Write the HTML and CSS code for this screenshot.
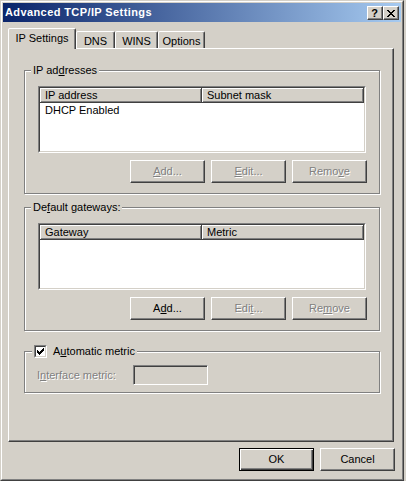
FILE: index.html
```html
<!DOCTYPE html>
<html>
<head>
<meta charset="utf-8">
<title>Advanced TCP/IP Settings</title>
<link rel="stylesheet" href="styles.css">
</head>
<body>
<div class="window">
  <div class="frame">
    <div class="titlebar">
      <span class="title">Advanced TCP/IP Settings</span>
      <div class="caption-btns">
        <span class="cbtn help">?</span>
        <span class="cbtn"><svg width="8" height="7" viewBox="0 0 8 7" shape-rendering="crispEdges"><path d="M0 0h2v1h-2zM6 0h2v1h-2zM1 1h2v1h-2zM5 1h2v1h-2zM2 2h4v1h-4zM3 3h2v1h-2zM2 4h4v1h-4zM1 5h2v1h-2zM5 5h2v1h-2zM0 6h2v1h-2zM6 6h2v1h-2z" fill="#000"/></svg></span>
      </div>
    </div>

    <div class="tabs">
      <div class="tab sel t-ip">IP Settings</div>
      <div class="tab t-dns">DNS</div>
      <div class="tab t-wins">WINS</div>
      <div class="tab t-opt">Options</div>
    </div>

    <div class="panel">
      <div class="group">
        <div class="gtitle">IP ad<u>d</u>resses</div>
        <div class="list">
          <div class="list-in">
            <div class="lhead"><div class="col">IP address</div><div class="col">Subnet mask</div></div>
            <div class="lrow">DHCP Enabled</div>
          </div>
        </div>
        <div class="btnrow">
          <div class="btn disabled"><span><u>A</u>dd...</span></div>
          <div class="btn disabled"><span><u>E</u>dit...</span></div>
          <div class="btn disabled"><span>Remo<u>v</u>e</span></div>
        </div>
      </div>

      <div class="group g2">
        <div class="gtitle">De<u>f</u>ault gateways:</div>
        <div class="list">
          <div class="list-in">
            <div class="lhead"><div class="col">Gateway</div><div class="col">Metric</div></div>
          </div>
        </div>
        <div class="btnrow">
          <div class="btn"><span>A<u>d</u>d...</span></div>
          <div class="btn disabled"><span>Edi<u>t</u>...</span></div>
          <div class="btn disabled"><span>Re<u>m</u>ove</span></div>
        </div>
      </div>

      <div class="group g3">
        <div class="gtitle gtitle-chk">
          <span class="chk"><span class="chk-in"><svg width="7" height="7" viewBox="0 0 7 7" shape-rendering="crispEdges"><path d="M6 0h1v3h-1v1h-1v1h-1v1h-1v1h-1v-1h-1v-1h-1v-3h1v1h1v1h1v-1h1v-1h1v-1h1v-1z" fill="#000"/></svg></span></span>
          <span>A<u>u</u>tomatic metric</span>
        </div>
        <div class="metric">
          <span class="mlabel disabled-text">I<u>n</u>terface metric:</span>
          <span class="mbox"></span>
        </div>
      </div>
    </div>

    <div class="footer">
      <div class="btn default"><span>OK</span></div>
      <div class="btn"><span>Cancel</span></div>
    </div>
  </div>
</div>
</body>
</html>
```

FILE: styles.css
```css
* {
  box-sizing: border-box;
}

body {
  margin: 0;
  background: #d4d0c8;
  font: 11px "Liberation Sans", Arial, sans-serif;
  color: #000;
}

u {
  text-decoration: underline;
  text-underline-offset: 1px;
}

.window {
  width: 404px;
  height: 481px;
  border: 1px solid;
  border-color: #d4d0c8 #404040 #404040 #d4d0c8;
  background: #d4d0c8;
}

.frame {
  height: 100%;
  border: 1px solid;
  border-color: #fff #808080 #808080 #fff;
  padding: 1px;
  display: flex;
  flex-direction: column;
}

/* title bar */
.titlebar {
  flex: none;
  height: 19px;
  display: flex;
  align-items: flex-start;
  padding-left: 2px;
  background: linear-gradient(to right, #0a246a, #a6caf0);
}

.title {
  margin-top: 3px;
  line-height: 13px;
  color: #fff;
  font-weight: bold;
  letter-spacing: 0.4px;
}

.caption-btns {
  display: flex;
  margin: 3px 2px 0 auto;
}

.cbtn {
  width: 16px;
  height: 14px;
  display: flex;
  align-items: center;
  justify-content: center;
  background: #d4d0c8;
  border: 1px solid;
  border-color: #fff #404040 #404040 #fff;
  box-shadow: inset -1px -1px 0 #808080;
}

.cbtn.help {
  font-weight: bold;
  font-size: 11px;
  line-height: 12px;
  padding-right: 1px;
}

/* tabs */
.tabs {
  flex: none;
  display: flex;
  align-items: flex-end;
  height: 20px;
  margin: 6px 0 0 5px;
  position: relative;
  z-index: 1;
}

.tab {
  height: 17px;
  padding-top: 3px;
  line-height: 12px;
  text-align: center;
  background: #d4d0c8;
  border: 1px solid;
  border-bottom: 0;
  border-color: #fff #404040 transparent #fff;
  border-radius: 2px 2px 0 0;
  box-shadow: inset -1px 0 0 #808080;
}

.tab.sel {
  height: 21px;
  margin-bottom: -1px;
  padding-top: 3px;
}

.t-ip { width: 68px; }
.t-dns { width: 39px; }
.t-wins { width: 43px; }
.t-opt { width: 47px; }

/* panel */
.panel {
  flex: 1;
  margin: 0 7px 0 5px;
  padding: 21px 0 0 15px;
  border: 1px solid;
  border-color: #fff #404040 #404040 #fff;
  box-shadow: inset -1px -1px 0 #808080;
}

.group {
  width: 356px;
  border: 1px solid #808080;
  box-shadow: 1px 1px 0 #fff, inset 1px 1px 0 #fff;
  padding-bottom: 10px;
}

.g2 {
  margin-top: 13px;
}

.g3 {
  margin-top: 20px;
  padding-bottom: 7px;
}

.gtitle {
  display: flex;
  align-items: center;
  width: fit-content;
  height: 13px;
  line-height: 13px;
  margin: -7px 0 0 6px;
  padding: 0 2px;
  background: #d4d0c8;
}

.gtitle-chk {
  margin-left: 7px;
}

/* list view */
.list {
  width: 328px;
  height: 67px;
  margin: 9px 0 0 13px;
  border: 1px solid;
  border-color: #808080 #fff #fff #808080;
}

.list-in {
  height: 100%;
  border: 1px solid;
  border-color: #404040 #d4d0c8 #d4d0c8 #404040;
  background: #fff;
}

.lhead {
  display: flex;
  height: 15px;
}

.col {
  flex: 1;
  height: 15px;
  padding: 1px 0 0 5px;
  line-height: 13px;
  background: #d4d0c8;
  border-right: 1px solid #404040;
  border-bottom: 1px solid #404040;
  box-shadow: inset 1px 1px 0 #fff, inset -1px -1px 0 #808080;
}

.lrow {
  padding-left: 5px;
  line-height: 15px;
}

/* buttons */
.btnrow {
  display: flex;
  justify-content: flex-end;
  gap: 6px;
  width: 329px;
  margin: 7px 0 0 13px;
}

.btn {
  width: 75px;
  height: 23px;
  display: flex;
  align-items: center;
  justify-content: center;
  line-height: 13px;
  background: #d4d0c8;
  border: 1px solid;
  border-color: #fff #404040 #404040 #fff;
  box-shadow: inset -1px -1px 0 #808080;
}

.btn.default {
  border-color: #000;
  box-shadow: inset 1px 1px 0 #fff, inset -1px -1px 0 #404040, inset -2px -2px 0 #808080;
}

.btn.disabled,
.disabled-text {
  color: #808080;
  text-shadow: 1px 1px 0 #fff;
}

/* checkbox */
.chk {
  flex: none;
  width: 13px;
  height: 13px;
  margin-right: 6px;
  border: 1px solid;
  border-color: #808080 #fff #fff #808080;
}

.chk-in {
  display: flex;
  align-items: center;
  justify-content: center;
  height: 100%;
  border: 1px solid;
  border-color: #404040 #d4d0c8 #d4d0c8 #404040;
  background: #fff;
}

/* interface metric */
.metric {
  display: flex;
  align-items: center;
  height: 20px;
  margin: 7px 0 0 12px;
}

.mlabel {
  width: 96px;
  line-height: 13px;
}

.mbox {
  width: 75px;
  height: 20px;
  border: 1px solid;
  border-color: #808080 #fff #fff #808080;
  box-shadow: inset 1px 1px 0 #404040, inset -1px -1px 0 #d4d0c8;
  background: #d4d0c8;
}

/* footer */
.footer {
  flex: none;
  display: flex;
  justify-content: flex-end;
  gap: 6px;
  margin: 6px 6px 7px 0;
}
```
